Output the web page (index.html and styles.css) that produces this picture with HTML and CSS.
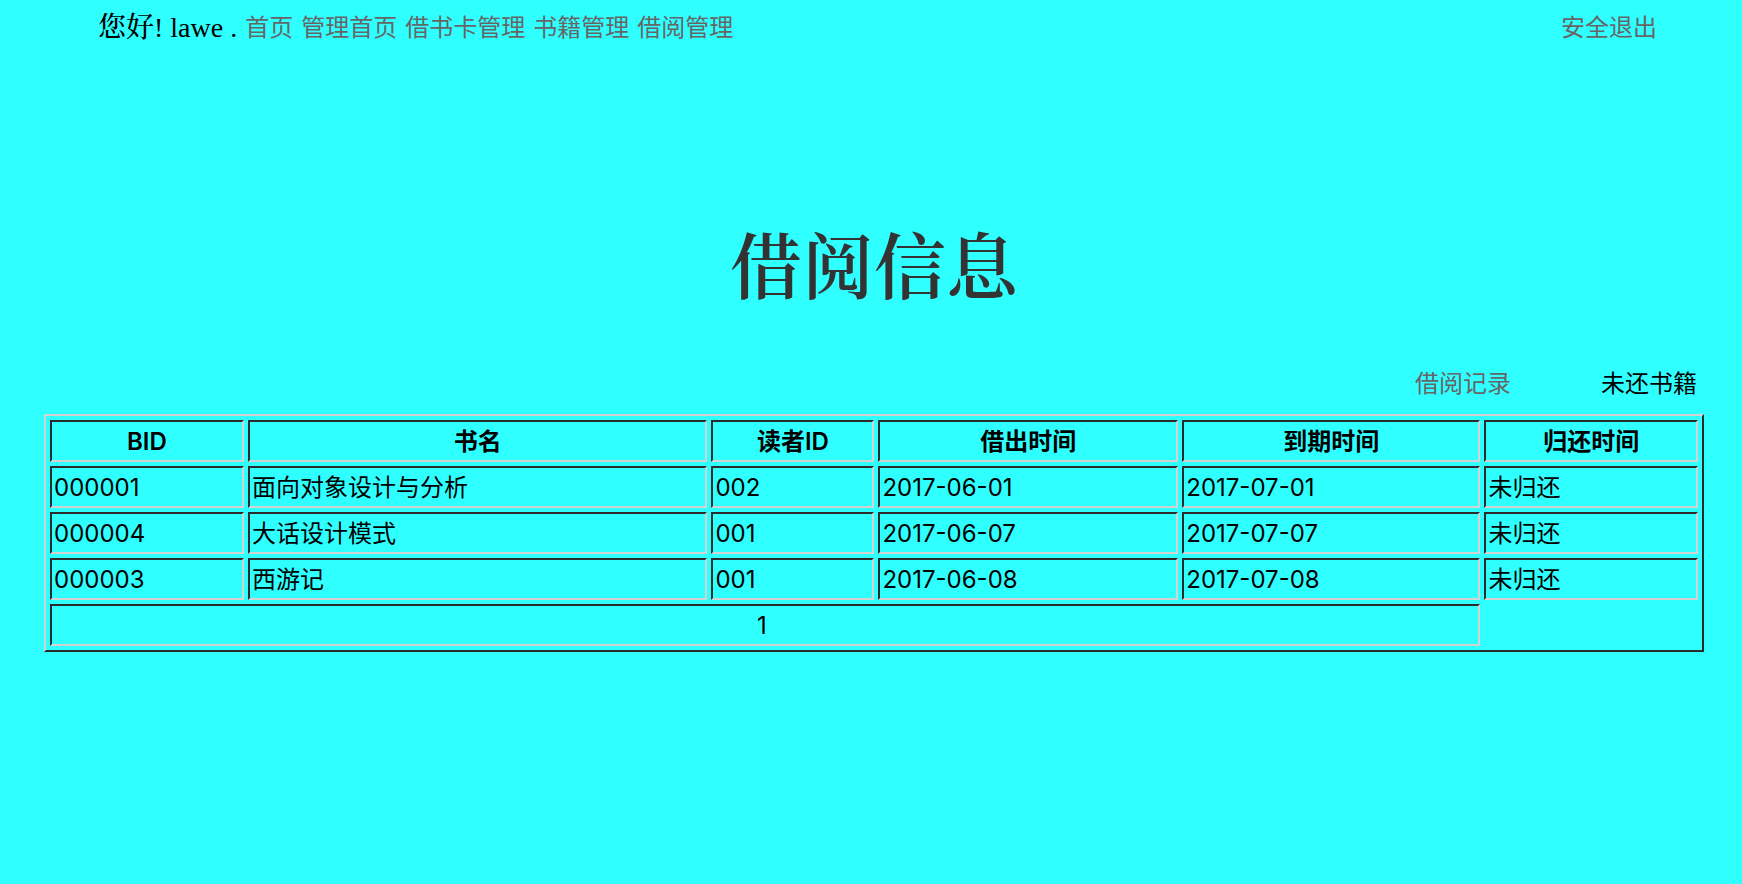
FILE: index.html
```
<!DOCTYPE html>
<html lang="zh-CN">
<head>
<meta charset="utf-8">
<title>借阅信息</title>
<link rel="stylesheet" href="styles.css">
</head>
<body>
<header class="topbar">
  <span class="greeting">您好! lawe .</span>
  <nav class="menu">
    <a href="#">首页</a>
    <a href="#">管理首页</a>
    <a href="#">借书卡管理</a>
    <a href="#">书籍管理</a>
    <a href="#">借阅管理</a>
  </nav>
  <a class="logout" href="#">安全退出</a>
</header>
<main class="content">
  <h1 class="title">借阅信息</h1>
  <div class="tabs">
    <a href="#">借阅记录</a>
    <span>未还书籍</span>
  </div>
  <table class="records">
    <colgroup>
      <col class="col-bid"><col class="col-name"><col class="col-reader"><col class="col-out"><col class="col-due"><col class="col-back">
    </colgroup>
    <thead>
      <tr><th>BID</th><th>书名</th><th>读者ID</th><th>借出时间</th><th>到期时间</th><th>归还时间</th></tr>
    </thead>
    <tbody>
      <tr><td>000001</td><td>面向对象设计与分析</td><td>002</td><td>2017-06-01</td><td>2017-07-01</td><td>未归还</td></tr>
      <tr><td>000004</td><td>大话设计模式</td><td>001</td><td>2017-06-07</td><td>2017-07-07</td><td>未归还</td></tr>
      <tr><td>000003</td><td>西游记</td><td>001</td><td>2017-06-08</td><td>2017-07-08</td><td>未归还</td></tr>
      <tr><td class="pager" colspan="5">1&nbsp;</td></tr>
    </tbody>
  </table>
</main>
</body>
</html>
```
FILE: styles.css
```
body {
  margin: 0;
  background: #2fffff;
  color: #000;
  font: 24px/34px Inter, "Noto Sans CJK SC", sans-serif;
}

a {
  color: #666;
  text-decoration: none;
}

.topbar {
  display: flex;
  align-items: center;
  gap: 8px;
  padding: 11px 85px 0 98px;
}

.greeting {
  font-family: "Liberation Serif", "Noto Serif CJK SC", "Noto Sans CJK SC", serif;
  font-size: 28px;
  font-weight: 500;
}

.menu {
  display: flex;
  gap: 8px;
}

.logout {
  margin-left: auto;
}

.content {
  padding: 0 38px 0 44px;
}

.title {
  margin: 167px 0 55px;
  color: #333;
  font: 600 72px/100px "Noto Serif CJK SC", "Noto Sans CJK SC", serif;
  text-align: center;
}

.tabs {
  display: flex;
  justify-content: flex-end;
  gap: 90px;
  padding: 0 7px 13px 0;
}

.records {
  width: 100%;
  table-layout: fixed;
  border: 2px solid;
  border-color: #d3d3d3 #2c2c2c #2c2c2c #d3d3d3;
  border-spacing: 4px;
}

.records th,
.records td {
  padding: 3px 2px 1px;
  border: 2px solid;
  border-color: #2c2c2c #d3d3d3 #d3d3d3 #2c2c2c;
}

.records th {
  font-weight: 600;
}

.records .pager {
  text-align: center;
}

.col-bid { width: 11.9%; }
.col-name { width: 28.2%; }
.col-reader { width: 10%; }
.col-out { width: 18.4%; }
.col-due { width: 18.3%; }
.col-back { width: 13.1%; }
```
